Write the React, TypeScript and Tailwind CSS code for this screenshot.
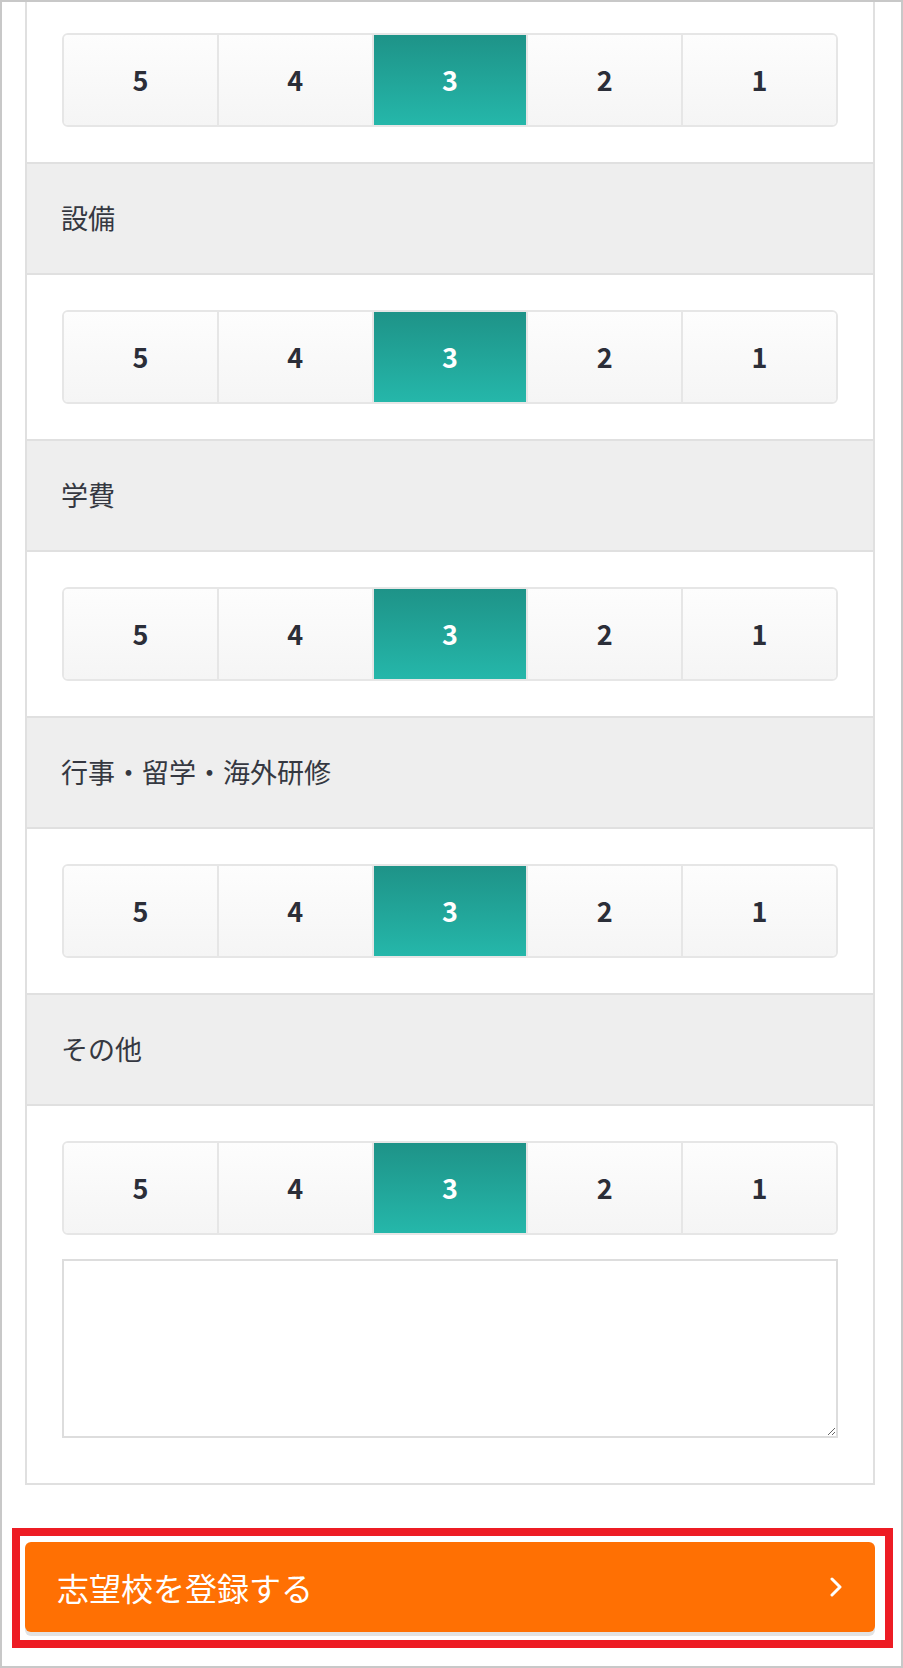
import { useState } from 'react'

const sections = ['設備', '学費', '行事・留学・海外研修', 'その他']

function Rating({ value, onChange }: { value: number; onChange: (v: number) => void }) {
  return (
    <div className="flex h-[94px] overflow-hidden rounded-[6px] border-2 border-[#e6e6e6]">
      {[5, 4, 3, 2, 1].map((n, i) => (
        <button
          key={n}
          type="button"
          onClick={() => onChange(n)}
          className={
            'flex flex-1 items-center justify-center text-[27px] font-bold ' +
            (i > 0 ? 'border-l-2 border-[#e6e6e6] ' : '') +
            (n === value
              ? 'bg-gradient-to-b from-[#1e9388] to-[#25b7aa] text-white'
              : 'bg-gradient-to-b from-[#fdfdfd] to-[#f5f5f5] text-[#2b2e38]')
          }
        >
          {n}
        </button>
      ))}
    </div>
  )
}

export default function App() {
  const [scores, setScores] = useState<number[]>([3, 3, 3, 3, 3])
  const set = (idx: number) => (v: number) => setScores(s => s.map((x, i) => (i === idx ? v : x)))

  return (
    <div
      className="h-[1668px] w-[903px] overflow-hidden border-2 border-[#c8c8c8] bg-white"
      style={{ fontFamily: '"Noto Sans CJK JP", "Noto Sans", sans-serif' }}
    >
      <div className="ml-[23px] w-[850px] border-x-2 border-b-2 border-[#e0e0e0]">
        <div className="px-[35px] pt-[31px] pb-[35px]">
          <Rating value={scores[0]} onChange={set(0)} />
        </div>

        {sections.map((label, idx) => (
          <div key={label}>
            <div className="flex h-[113px] items-center border-y-2 border-[#e0e0e0] bg-[#eeeeee] pl-[34px] text-[27px] text-[#353841]">
              {label}
            </div>
            <div className={'px-[35px] pt-[35px] ' + (idx === sections.length - 1 ? 'pb-[45px]' : 'pb-[35px]')}>
              <Rating value={scores[idx + 1]} onChange={set(idx + 1)} />
              {idx === sections.length - 1 && (
                <textarea className="mt-[24px] block h-[179px] w-full border-2 border-[#dddddd] bg-white p-2 text-[20px] outline-none" />
              )}
            </div>
          </div>
        ))}
      </div>

      {/* highlight box around submit */}
      <div className="mt-[43px] ml-[10px] w-[881px] border-8 border-[#ed1c24] pt-[6px] pr-[10px] pb-[8px] pl-[5px]">
        <button
          type="button"
          className="flex h-[90px] w-[850px] items-center justify-between rounded-[6px] bg-[#ff7003] pr-[33px] pl-[32px] text-[32px] text-white shadow-[0_4px_0_#e2e2e2]"
        >
          <span>志望校を登録する</span>
          <svg width="12" height="20" viewBox="0 0 12 20" fill="none">
            <polyline points="2,2 10,10 2,18" stroke="white" strokeWidth="3" strokeLinecap="round" strokeLinejoin="round" />
          </svg>
        </button>
      </div>
    </div>
  )
}
